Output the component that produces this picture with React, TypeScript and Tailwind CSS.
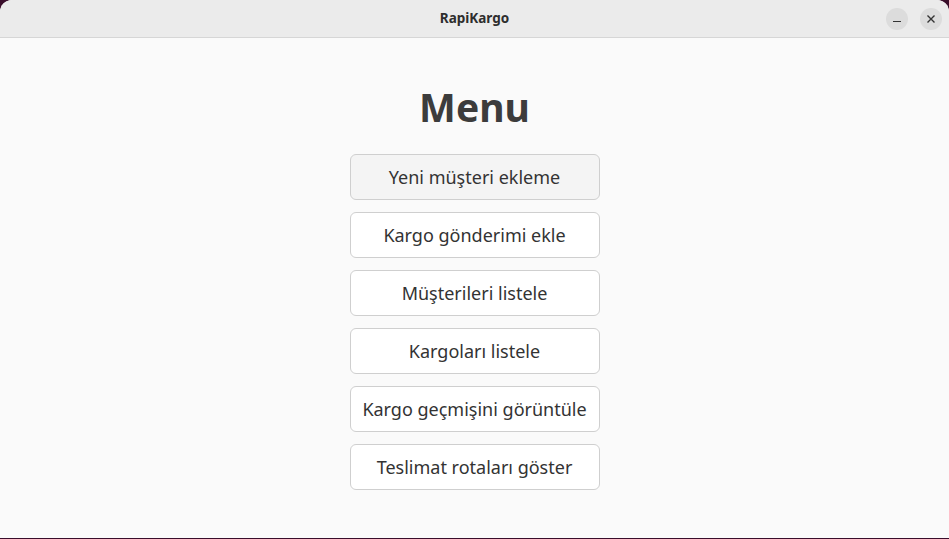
import React from "react";

const items = [
  "Yeni müşteri ekleme",
  "Kargo gönderimi ekle",
  "Müşterileri listele",
  "Kargoları listele",
  "Kargo geçmişini görüntüle",
  "Teslimat rotaları göster",
];

export default function App() {
  return (
    <div className="w-[949px] h-[539px] bg-[#3a0e2b] flex flex-col overflow-hidden" style={{ fontFamily: '"Noto Sans", "DejaVu Sans", sans-serif' }}>
      <div className="flex-1 flex flex-col rounded-t-[12px] overflow-hidden bg-[#fafafa] mb-[1px]">
        <div className="h-[38px] shrink-0 bg-[#ebebeb] border-b border-[#d6d6d6] flex items-center justify-center relative">
          <span className="text-[13.5px] font-bold text-[#2e2e2e]">RapiKargo</span>
          <div className="absolute right-[7px] top-[8px] flex gap-[12px]">
            <div className="w-[22px] h-[22px] rounded-full bg-[#dcdcdc] flex items-center justify-center">
              <div className="w-[8px] h-[1.5px] bg-[#333] mt-[5px]" />
            </div>
            <div className="w-[22px] h-[22px] rounded-full bg-[#dcdcdc] flex items-center justify-center">
              <svg width="10" height="10" viewBox="0 0 10 10">
                <path d="M1.5 1.5 L8.5 8.5 M8.5 1.5 L1.5 8.5" stroke="#333" strokeWidth="1.4" />
              </svg>
            </div>
          </div>
        </div>
        <div className="flex-1 flex flex-col items-center">
          <h1 className="mt-[42px] text-[39px] leading-[54px] font-bold text-[#3c3c3c]">Menu</h1>
          <div className="mt-[20px] flex flex-col gap-[12px]">
            {items.map((t, i) => (
              <button
                key={t}
                className={`w-[250px] h-[46px] rounded-[6px] border border-[#cfcfcf] text-[18px] text-[#333] flex items-center justify-center ${i === 0 ? "bg-[#f4f4f4]" : "bg-white"}`}
              >
                {t}
              </button>
            ))}
          </div>
        </div>
      </div>
    </div>
  );
}
